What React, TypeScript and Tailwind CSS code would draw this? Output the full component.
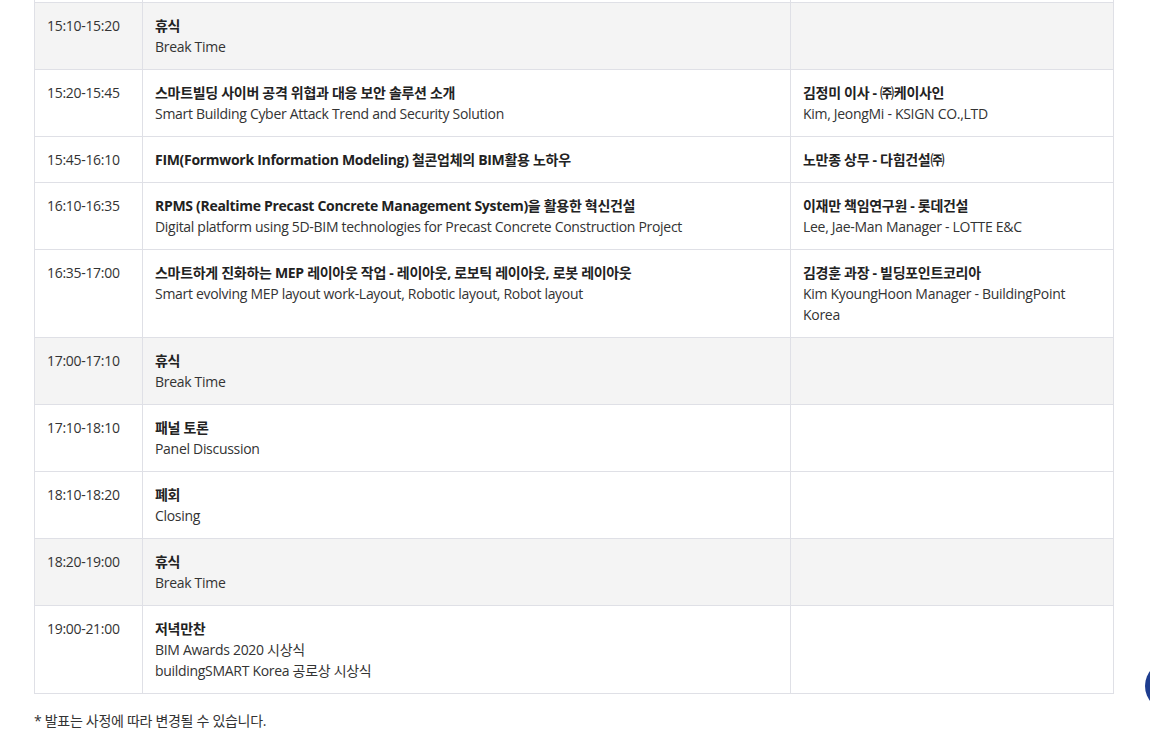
import React from "react";

interface Session {
  time: string;
  title: string;
  sub?: string[];
  speaker?: string;
  speakerSub?: string;
  isBreak?: boolean;
}

const sessions: Session[] = [
  { time: "15:10-15:20", title: "휴식", sub: ["Break Time"], isBreak: true },
  {
    time: "15:20-15:45",
    title: "스마트빌딩 사이버 공격 위협과 대응 보안 솔루션 소개",
    sub: ["Smart Building Cyber Attack Trend and Security Solution"],
    speaker: "김정미 이사 - ㈜케이사인",
    speakerSub: "Kim, JeongMi - KSIGN CO.,LTD",
  },
  {
    time: "15:45-16:10",
    title: "FIM(Formwork Information Modeling) 철콘업체의 BIM활용 노하우",
    speaker: "노만종 상무 - 다힘건설㈜",
  },
  {
    time: "16:10-16:35",
    title: "RPMS (Realtime Precast Concrete Management System)을 활용한 혁신건설",
    sub: ["Digital platform using 5D-BIM technologies for Precast Concrete Construction Project"],
    speaker: "이재만 책임연구원 - 롯데건설",
    speakerSub: "Lee, Jae-Man Manager - LOTTE E&C",
  },
  {
    time: "16:35-17:00",
    title: "스마트하게 진화하는 MEP 레이아웃 작업 - 레이아웃, 로보틱 레이아웃, 로봇 레이아웃",
    sub: ["Smart evolving MEP layout work-Layout, Robotic layout, Robot layout"],
    speaker: "김경훈 과장 - 빌딩포인트코리아",
    speakerSub: "Kim KyoungHoon Manager - BuildingPoint Korea",
  },
  { time: "17:00-17:10", title: "휴식", sub: ["Break Time"], isBreak: true },
  { time: "17:10-18:10", title: "패널 토론", sub: ["Panel Discussion"] },
  { time: "18:10-18:20", title: "폐회", sub: ["Closing"] },
  { time: "18:20-19:00", title: "휴식", sub: ["Break Time"], isBreak: true },
  {
    time: "19:00-21:00",
    title: "저녁만찬",
    sub: ["BIM Awards 2020 시상식", "buildingSMART Korea 공로상 시상식"],
  },
];

const ScheduleRow = ({ s }: { s: Session }) => (
  <div
    className={`flex border-b border-[#dfe0e6] ${
      s.isBreak ? "bg-[#f4f4f4]" : "bg-white"
    }`}
  >
    <div className="w-[108px] shrink-0 border-r border-[#dfe0e6] px-3 py-3">
      {s.time}
    </div>
    <div className="w-[648px] shrink-0 border-r border-[#dfe0e6] px-3 py-3">
      <div className="font-bold text-[#222]">{s.title}</div>
      {s.sub?.map((line) => (
        <div key={line}>{line}</div>
      ))}
    </div>
    <div className="flex-1 px-3 py-3">
      {s.speaker && <div className="font-bold text-[#222]">{s.speaker}</div>}
      {s.speakerSub && <div>{s.speakerSub}</div>}
    </div>
  </div>
);

export default function App() {
  return (
    <div
      className="min-h-[736px] bg-white text-[14px] leading-[21px] tracking-[-0.3px] text-[#333]"
      style={{ fontFamily: '"Open Sans", "Noto Sans CJK KR", sans-serif' }}
    >
      <div className="ml-[34px] mt-[-64px] w-[1080px] border-x border-[#dfe0e6]">
        {/* previous session, scrolled out of view */}
        <div className="flex h-[67px] border-b border-[#dfe0e6] bg-white">
          <div className="w-[108px] shrink-0 border-r border-[#dfe0e6]" />
          <div className="w-[648px] shrink-0 border-r border-[#dfe0e6]" />
          <div className="flex-1" />
        </div>
        {sessions.map((s) => (
          <ScheduleRow key={s.time} s={s} />
        ))}
      </div>
      <p className="ml-[34px] mt-4">* 발표는 사정에 따라 변경될 수 있습니다.</p>

      <button className="fixed left-[1145px] top-[661px] h-[50px] w-[50px] rounded-full bg-[#1e3d8f]" />
    </div>
  );
}
